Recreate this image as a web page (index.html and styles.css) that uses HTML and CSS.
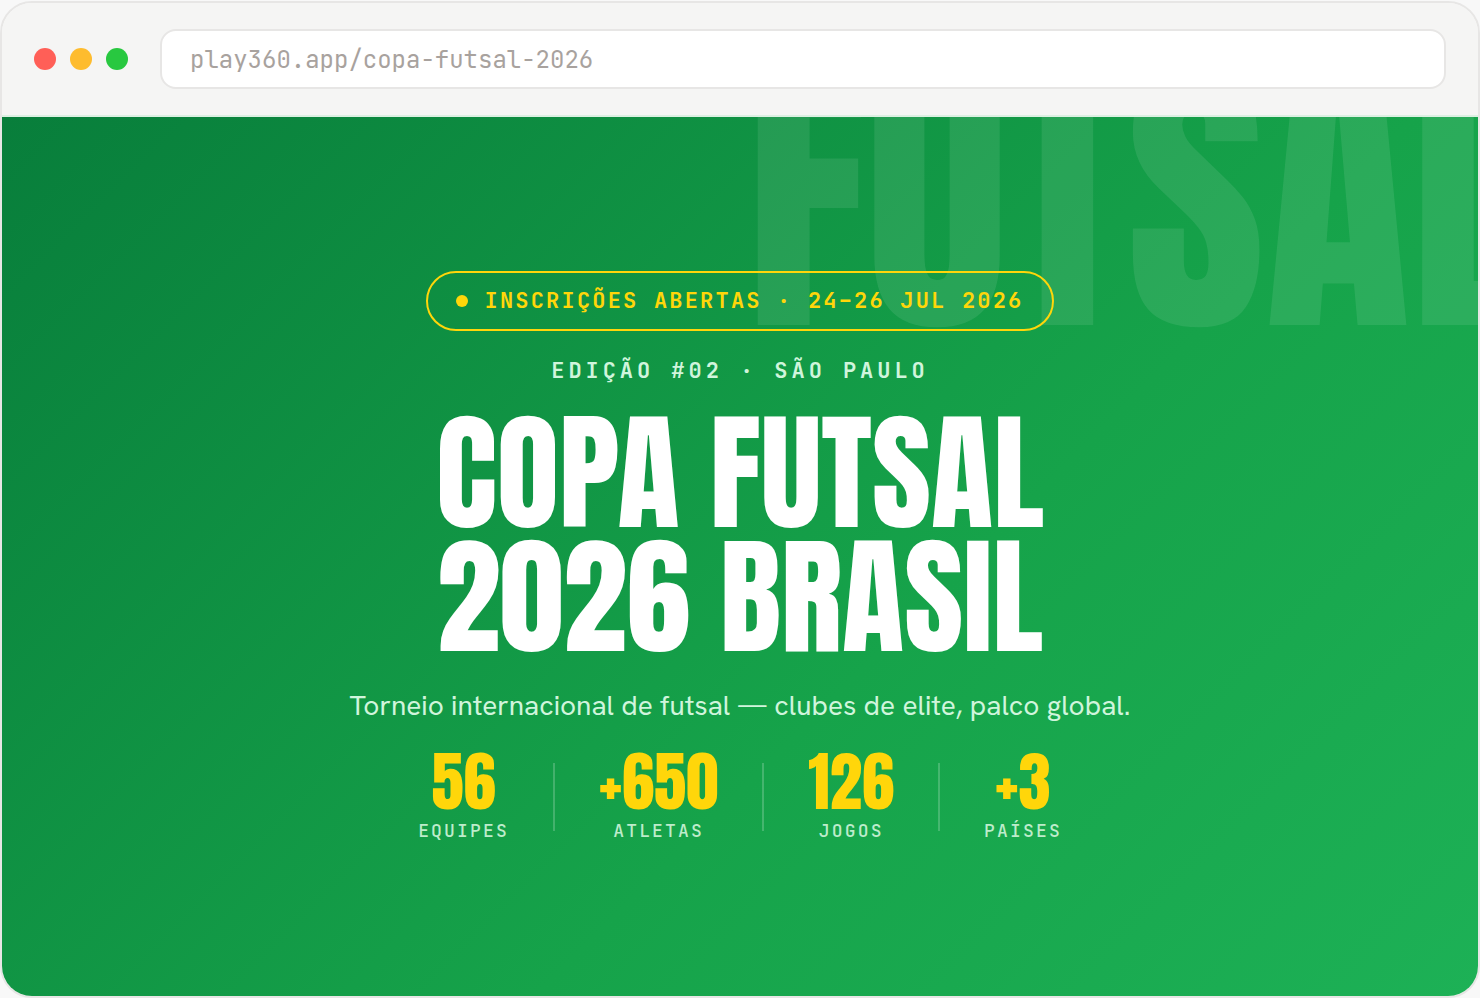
FILE: index.html
```html
<!DOCTYPE html>
<html lang="pt-BR">
<head>
  <meta charset="UTF-8" />
  <meta name="viewport" content="width=device-width, initial-scale=1.0"/>
  <title>Copa Futsal 2026 Brasil</title>
  <link rel="stylesheet" href="styles.css">
</head>
<body>
  <div class="browser">
    <header class="toolbar">
      <div class="dots">
        <span class="dot red"></span>
        <span class="dot yellow"></span>
        <span class="dot green"></span>
      </div>
      <input class="address" type="text" aria-label="Endereço" value="play360.app/copa-futsal-2026" spellcheck="false" />
    </header>

    <main class="hero">
      <div class="watermark" aria-hidden="true">FUTSAL</div>

      <div class="badge"><span class="badge-dot"></span>INSCRIÇÕES ABERTAS · 24–26 JUL 2026</div>
      <p class="edition">EDIÇÃO #02 · SÃO PAULO</p>
      <h1>COPA FUTSAL<br>2026 BRASIL</h1>
      <p class="subtitle">Torneio internacional de futsal — clubes de elite, palco global.</p>

      <div class="stats">
        <div class="stat"><strong>56</strong><span>EQUIPES</span></div>
        <div class="divider"></div>
        <div class="stat"><strong>+650</strong><span>ATLETAS</span></div>
        <div class="divider"></div>
        <div class="stat"><strong>126</strong><span>JOGOS</span></div>
        <div class="divider"></div>
        <div class="stat"><strong>+3</strong><span>PAÍSES</span></div>
      </div>
    </main>
  </div>
</body>
</html>
```
FILE: styles.css
```css
:root {
  --line: #e7e6e5;
  --bar: #f5f5f4;
  --yellow: #ffd60a;
  --mint: #d0f5dc;
  --display: Anton, "Liberation Sans Narrow", sans-serif;
  --mono: "JetBrains Mono", "DejaVu Sans Mono", monospace;
  --sans: "Hanken Grotesk", "Liberation Sans", sans-serif;
}

* {
  box-sizing: border-box;
}

body {
  margin: 0;
  padding-top: 1px;
  min-height: 100vh;
  display: flex;
  background: #f8f8f8;
  font-family: var(--sans);
}

.browser {
  flex: 1;
  display: flex;
  flex-direction: column;
  border: 2px solid var(--line);
  border-radius: 32px;
  overflow: hidden;
}

.toolbar {
  display: flex;
  align-items: center;
  gap: 32px;
  padding: 26px 32px;
  background: var(--bar);
  border-bottom: 2px solid #dcf0e2;
}

.dots {
  display: flex;
  gap: 14px;
}

.dot {
  width: 22px;
  height: 22px;
  border-radius: 50%;
}

.red { background: #ff5f57; }
.yellow { background: #febc2e; }
.green { background: #28c840; }

.address {
  flex: 1;
  min-width: 0;
  height: 60px;
  padding: 0 28px;
  border: 2px solid var(--line);
  border-radius: 16px;
  background: #fff;
  color: #a8a29e;
  font-family: var(--mono);
  font-size: 24px;
}

.hero {
  flex: 1;
  position: relative;
  display: flex;
  flex-direction: column;
  align-items: center;
  justify-content: center;
  gap: 24px;
  overflow: hidden;
  background: linear-gradient(135deg, #087e3b 0%, #16a34a 60%, #1db156 100%);
  text-align: center;
}

.hero > * {
  position: relative;
}

.hero > .watermark {
  position: absolute;
  top: -69px;
  right: -52px;
  font-family: var(--display);
  font-size: 300px;
  line-height: 1;
  color: rgba(255, 255, 255, 0.09);
}

.badge {
  display: flex;
  align-items: center;
  gap: 16px;
  padding: 14px 28px;
  border: 2px solid var(--yellow);
  border-radius: 30px;
  color: var(--yellow);
  font-family: var(--mono);
  font-size: 22px;
  font-weight: 700;
  line-height: 28px;
  letter-spacing: 0.1em;
}

.badge-dot {
  width: 12px;
  height: 12px;
  border-radius: 50%;
  background: var(--yellow);
}

.edition {
  margin: 0;
  color: var(--mint);
  font-family: var(--mono);
  font-size: 22px;
  font-weight: 700;
  line-height: 32px;
  letter-spacing: 0.18em;
}

h1 {
  margin: 0;
  color: #fff;
  font-family: var(--display);
  font-size: 128px;
  font-weight: 400;
  line-height: 124px;
}

.subtitle {
  margin: 0;
  color: var(--mint);
  font-size: 28px;
  line-height: 44px;
}

.stats {
  display: flex;
  align-items: center;
  justify-content: center;
  gap: 44px;
}

.stat {
  display: flex;
  flex-direction: column;
  align-items: center;
  gap: 6px;
}

.stat strong {
  color: var(--yellow);
  font-family: var(--display);
  font-size: 65px;
  font-weight: 400;
  line-height: 62px;
}

.stat span {
  color: #bdeccb;
  font-family: var(--mono);
  font-size: 18px;
  font-weight: 500;
  line-height: 24px;
  letter-spacing: 0.12em;
}

.divider {
  width: 2px;
  height: 68px;
  background: rgba(255, 255, 255, 0.2);
}
```
